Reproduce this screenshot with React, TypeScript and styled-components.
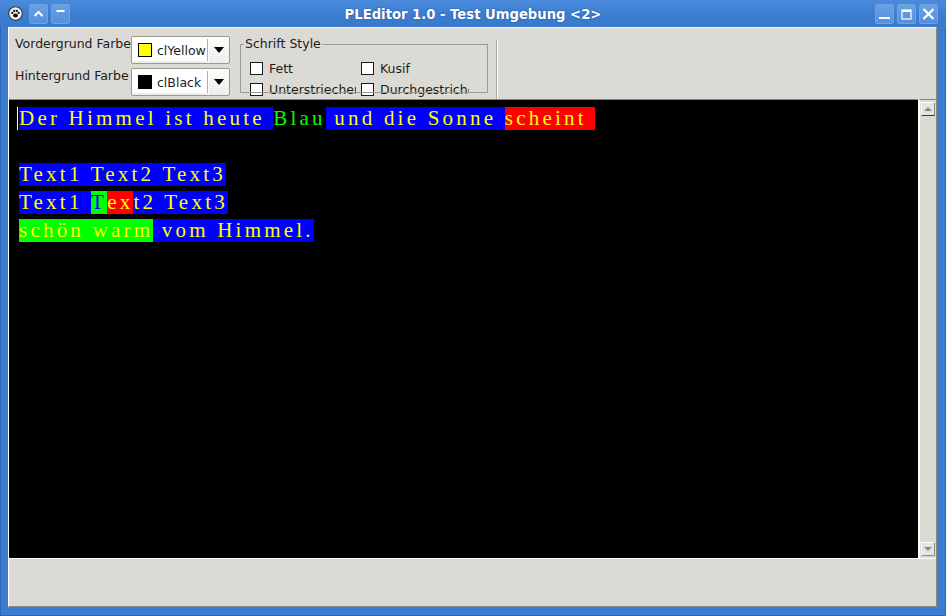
import React from 'react';
import styled, { createGlobalStyle } from 'styled-components';

// ----------------------------------------------------------------------
// Global
const GlobalStyle = createGlobalStyle`
  html, body {
    margin: 0;
    padding: 0;
    background: #3b7cd0;
    overflow: hidden;
  }
  #root {
    width: 946px;
    height: 616px;
  }
`;

const ui = `"DejaVu Sans", "Noto Sans", sans-serif`;
const gray = '#dcdad5';

// ----------------------------------------------------------------------
// Window frame
const Window = styled.div`
  box-sizing: border-box;
  width: 946px;
  height: 616px;
  display: flex;
  flex-direction: column;
  padding: 0 9px 9px 8px;
  background: #3c7dd1;
  box-shadow: inset 1px 0 #2c65b5, inset -1px 0 #2c65b5, inset 0 -1px #2c65b5;
  font-family: ${ui};
  font-size: 12.5px;
  color: #1c1c1c;
`;

const TitleBar = styled.div`
  height: 27px;
  margin: 0 -9px 0 -8px;
  padding: 0 8px 0 8px;
  display: grid;
  grid-template-columns: 1fr auto 1fr;
  align-items: center;
  background: linear-gradient(#4b8bdc, #3b7cd0 60%, #3a7acd);
`;

const TitleGroup = styled.div<{ $end?: boolean }>`
  display: flex;
  align-items: center;
  gap: 3px;
  justify-content: ${(p) => (p.$end ? 'flex-end' : 'flex-start')};
`;

const TitleText = styled.div`
  font-family: ${ui};
  font-weight: bold;
  font-size: 13.2px;
  color: #fff;
  text-shadow: 0 0 2px rgba(20, 50, 110, 0.6);
  white-space: nowrap;
  padding-top: 1px;
`;

const AppIcon = styled.svg`
  width: 15px;
  height: 15px;
  margin: 0 3px 0 0;
`;

const TitleButton = styled.div`
  box-sizing: border-box;
  width: 19px;
  height: 20px;
  border: 1px solid #6ea2e2;
  border-radius: 2px;
  background: linear-gradient(#68a0e2, #5590da);
  display: flex;
  align-items: center;
  justify-content: center;
`;

// ----------------------------------------------------------------------
// Client area
const Client = styled.div`
  flex: 1;
  display: flex;
  flex-direction: column;
  background: ${gray};
  border-top: 1px solid #f4f3f1;
  border-left: 1px solid #fff;
  border-right: 1px solid #8c8a85;
  border-bottom: 1px solid #8c8a85;
`;

const Toolbar = styled.div`
  height: 71px;
  box-sizing: border-box;
  display: flex;
  align-items: flex-start;
  padding: 8px 0 0 6px;
`;

const ColorGrid = styled.div`
  display: grid;
  grid-template-columns: 116px 99px;
  grid-auto-rows: 28px;
  row-gap: 4px;
`;

const FieldLabel = styled.div`
  overflow: hidden;
  white-space: nowrap;
  line-height: 14px;
  padding-top: 1px;
`;

const Combo = styled.div`
  box-sizing: border-box;
  height: 28px;
  display: flex;
  align-items: center;
  border: 1px solid #9b9893;
  border-radius: 2px;
  background: linear-gradient(#fdfdfc, #eeedea);
  box-shadow: inset 1px 1px 0 #fff;
`;

const ComboField = styled.div`
  flex: 1;
  align-self: stretch;
  margin: 2px 0 2px 1px;
  display: flex;
  align-items: center;
  gap: 5px;
  padding-left: 5px;
  background: #fff;
  border-right: 1px solid #b3b0aa;
`;

const Swatch = styled.span<{ $color: string }>`
  box-sizing: border-box;
  width: 14px;
  height: 14px;
  background: ${(p) => p.$color};
  border: 1px solid #000;
`;

const ComboArrow = styled.div`
  width: 20px;
  display: flex;
  justify-content: center;
  align-items: center;
  border-left: 1px solid #fff;
  align-self: stretch;
`;

const Triangle = styled.span`
  width: 0;
  height: 0;
  border-left: 5px solid transparent;
  border-right: 5px solid transparent;
  border-top: 6px solid #000;
`;

const GroupBox = styled.fieldset`
  position: relative;
  box-sizing: border-box;
  width: 248px;
  height: 56px;
  margin: 1px 0 0 10px;
  padding: 0;
  border: 1px solid #9d9a94;
  border-bottom: none;
  min-width: 0;

  &::after {
    content: '';
    position: absolute;
    left: -1px;
    right: -1px;
    bottom: 0;
    height: 1px;
    background: #9d9a94;
    z-index: 2;
  }
`;

const Legend = styled.legend`
  margin-left: 3px;
  padding: 0 1px;
  line-height: 14px;
  font-size: 12.5px;
`;

const CheckGrid = styled.div`
  display: grid;
  grid-template-columns: 111px 108px;
  grid-auto-rows: 13px;
  row-gap: 8px;
  margin-top: 11px;
  padding-left: 9px;
`;

const CheckItem = styled.label<{ $labelWidth: number }>`
  display: flex;
  align-items: center;
  gap: 6px;
  white-space: nowrap;

  span {
    width: ${(p) => p.$labelWidth}px;
    line-height: 17px;
    overflow: hidden;
  }
`;

const CheckBox = styled.span`
  flex: none;
  box-sizing: border-box;
  width: 13px !important;
  height: 13px;
  background: #fff;
  border: 1px solid #1a1a1a;
`;

const Separator = styled.div`
  width: 1px;
  height: 63px;
  margin: 4px 0 0 8px;
  background: #a9a6a0;
  border-right: 1px solid #fff;
`;

// ----------------------------------------------------------------------
// Editor
const EditorRow = styled.div`
  height: 460px;
  box-sizing: border-box;
  display: flex;
  border-bottom: 1px solid #fff;
`;

const Editor = styled.div`
  flex: 1;
  background: #000;
  border-top: 1px solid #85837e;
  padding: 7px 0 0 10px;
  font-family: "Liberation Serif", "DejaVu Serif", serif;
  font-size: 21px;
  letter-spacing: 3.22px;
  color: #ffff00;
`;

const Line = styled.div`
  height: 28px;
  white-space: pre;
`;

const Run = styled.span<{ $bg?: string; $fg?: string }>`
  display: inline-block;
  height: 23px;
  line-height: 23px;
  vertical-align: top;
  background: ${(p) => p.$bg || 'transparent'};
  color: ${(p) => p.$fg || '#ffff00'};
`;

const Caret = styled.span`
  display: inline-block;
  width: 1px;
  height: 23px;
  margin: 0 1px 0 -2px;
  vertical-align: top;
  background: #fff;
`;

const ScrollBar = styled.div`
  width: 15px;
  display: flex;
  flex-direction: column;
  justify-content: space-between;
  padding: 2px 0 2px 1px;
  background: ${gray};
  border-left: 2px solid #fff;
  border-top: 1px solid #85837e;
`;

const ScrollButton = styled.div<{ $down?: boolean }>`
  box-sizing: border-box;
  height: 14px;
  width: 14px;
  display: flex;
  align-items: center;
  justify-content: center;
  background: #e6e4e0;
  border: 1px solid;
  border-color: #fff #8c8a85 #8c8a85 #fff;
  ${(p) => (p.$down ? 'border-top: 1px solid #fff;' : 'border-bottom: 1px solid #3c3b39;')}
`;

const ScrollArrow = styled.span<{ $down?: boolean }>`
  width: 0;
  height: 0;
  border-left: 4px solid transparent;
  border-right: 4px solid transparent;
  ${(p) =>
    p.$down ? 'border-top: 4px solid #8a8884;' : 'border-bottom: 4px solid #8a8884;'}
`;

const StatusBar = styled.div`
  flex: 1;
  background: ${gray};
`;

// ----------------------------------------------------------------------

const colorFields = [
  { label: 'Vordergrund Farbe', color: '#ffff00', name: 'clYellow' },
  { label: 'Hintergrund Farbe', color: '#000000', name: 'clBlack' },
];

const styleChecks = [
  { label: 'Fett', width: 87 },
  { label: 'Kusif', width: 100 },
  { label: 'Unterstriechen', width: 87 },
  { label: 'Durchgestrichen', width: 100 },
];

const BLUE = '#0000ff';
const RED = '#ff0000';
const LIME = '#00ff00';

export default function App() {
  return (
    <>
      <GlobalStyle />
      <Window>
        <TitleBar>
          <TitleGroup>
            <AppIcon viewBox="0 0 16 16">
              <circle cx="8" cy="8" r="7.2" fill="#f2f2f2" stroke="#3a3a3a" strokeWidth="1.2" />
              <ellipse cx="8" cy="10.2" rx="2.6" ry="2.1" fill="#111" />
              <circle cx="4.6" cy="7.4" r="1.2" fill="#111" />
              <circle cx="6.6" cy="5.2" r="1.2" fill="#111" />
              <circle cx="9.4" cy="5.2" r="1.2" fill="#111" />
              <circle cx="11.4" cy="7.4" r="1.2" fill="#111" />
            </AppIcon>
            <TitleButton>
              <svg width="17" height="18" viewBox="0 0 17 18">
                <polyline points="4.5,11 8.5,7 12.5,11" fill="none" stroke="#fff" strokeWidth="2" />
              </svg>
            </TitleButton>
            <TitleButton>
              <svg width="17" height="18" viewBox="0 0 17 18">
                <rect x="4.5" y="5" width="8" height="2" fill="#fff" />
              </svg>
            </TitleButton>
          </TitleGroup>
          <TitleText>PLEditor 1.0 - Test Umgebung &lt;2&gt;</TitleText>
          <TitleGroup $end>
            <TitleButton>
              <svg width="17" height="18" viewBox="0 0 17 18">
                <rect x="3" y="12" width="11" height="2" fill="#fff" />
              </svg>
            </TitleButton>
            <TitleButton>
              <svg width="17" height="18" viewBox="0 0 17 18">
                <rect x="4" y="5" width="9" height="9" fill="none" stroke="#fff" strokeWidth="1.2" />
                <rect x="4" y="5" width="9" height="2" fill="#fff" />
              </svg>
            </TitleButton>
            <TitleButton>
              <svg width="17" height="18" viewBox="0 0 17 18">
                <path d="M3.5 4 L13.5 14 M13.5 4 L3.5 14" stroke="#fff" strokeWidth="2.2" />
              </svg>
            </TitleButton>
          </TitleGroup>
        </TitleBar>

        <Client>
          <Toolbar>
            <ColorGrid>
              {colorFields.map((f) => (
                <React.Fragment key={f.name}>
                  <FieldLabel>{f.label}</FieldLabel>
                  <Combo>
                    <ComboField>
                      <Swatch $color={f.color} />
                      {f.name}
                    </ComboField>
                    <ComboArrow>
                      <Triangle />
                    </ComboArrow>
                  </Combo>
                </React.Fragment>
              ))}
            </ColorGrid>

            <GroupBox>
              <Legend>Schrift Style</Legend>
              <CheckGrid>
                {styleChecks.map((c) => (
                  <CheckItem key={c.label} $labelWidth={c.width}>
                    <CheckBox />
                    <span>{c.label}</span>
                  </CheckItem>
                ))}
              </CheckGrid>
            </GroupBox>

            <Separator />
          </Toolbar>

          <EditorRow>
            <Editor>
              <Line>
                <Caret />
                <Run $bg={BLUE}>Der Himmel ist heute </Run>
                <Run $fg={LIME}>Blau</Run>
                <Run $bg={BLUE}> und die Sonne </Run>
                <Run $bg={RED}>scheint </Run>
              </Line>
              <Line />
              <Line>
                <Run $bg={BLUE}>Text1 Text2 Text3</Run>
              </Line>
              <Line>
                <Run $bg={BLUE}>Text1 </Run>
                <Run $bg={LIME} $fg={BLUE}>T</Run>
                <Run $bg={RED}>ex</Run>
                <Run $bg={BLUE}>t2 Text3</Run>
              </Line>
              <Line>
                <Run $bg={LIME}>schön warm</Run>
                <Run $bg={BLUE}> vom Himmel.</Run>
              </Line>
            </Editor>
            <ScrollBar>
              <ScrollButton>
                <ScrollArrow />
              </ScrollButton>
              <ScrollButton $down>
                <ScrollArrow $down />
              </ScrollButton>
            </ScrollBar>
          </EditorRow>

          <StatusBar />
        </Client>
      </Window>
    </>
  );
}
